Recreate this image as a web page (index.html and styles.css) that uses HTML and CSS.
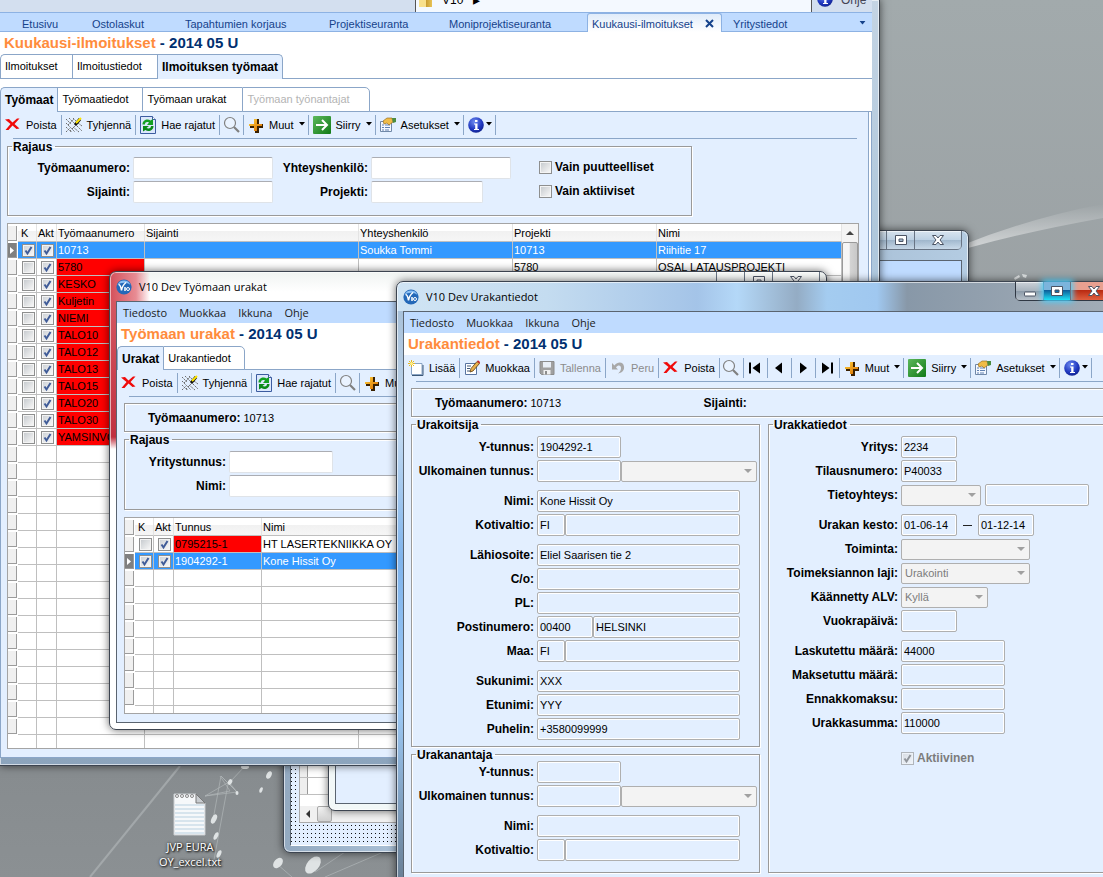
FILE: index.html
```html
<!DOCTYPE html>
<html lang="fi">
<head>
    <meta charset="UTF-8">
    <meta name="viewport" content="width=device-width, initial-scale=1.0">
    <title>V10 Dev Urakantiedot</title>
    <link rel="stylesheet" href="styles.css">
</head>
<body>
    <svg class="symbols" aria-hidden="true">
        <defs>
            <linearGradient id="gGreen" x1="0" y1="0" x2="1" y2="1"><stop offset="0" stop-color="#5cb85c"/><stop offset="1" stop-color="#117a17"/></linearGradient>
            <linearGradient id="gGold" x1="0" y1="0" x2="1" y2="1"><stop offset="0" stop-color="#ffd23c"/><stop offset="1" stop-color="#d86a00"/></linearGradient>
            <radialGradient id="gBlue" cx=".4" cy=".3" r=".8"><stop offset="0" stop-color="#6f8cf0"/><stop offset=".6" stop-color="#2038c0"/><stop offset="1" stop-color="#0c1c80"/></radialGradient>
            <linearGradient id="gPaper" x1="0" y1="0" x2="1" y2="1"><stop offset="0" stop-color="#fff"/><stop offset="1" stop-color="#b8d0f0"/></linearGradient>
        </defs>
        <symbol id="i-delete" viewBox="0 0 16 16"><path d="M0 2.500l4-.5 3.500 3.500L12 1.500h2.500L9.500 7l5 4.500-3 .5-4-3.500L3.500 13H.5L5.500 7z" fill="#f00a0a"/></symbol>
        <symbol id="i-clear" viewBox="0 0 16 16"><path d="M0 2l5 5M3 1l5 5M7 1l3 3M0 6l9 9M0 10l5 5M4 13l2 2M7 10l6 5M11 9l5 5M12 6l4 3M0 15l4-4M2 8l6-6M6 12l4-4" stroke="#6e6e6e" stroke-dasharray="2 1" fill="none"/><path d="M9 8l5-6" stroke="#111" stroke-width="3"/><path d="M10 6l5-5" stroke="#ffe600" stroke-width="2"/></symbol>
        <symbol id="i-refresh" viewBox="0 0 16 18"><path d="M.5.5h12l3 3v14H.5z" fill="#dce8fc" stroke="#3c5ca0"/><path d="M12.500.5v3h3" fill="#fff" stroke="#3c5ca0"/><path d="M2.500 8.500c0-5 5.500-6 8-4L13 3v6H7l2-2.500C7 5.500 5 6 5 8.500z" fill="#13a022"/><path d="M13.500 10c0 5-5.500 6-8 4L3 15.500V10h6l-2.500 2c2 1 4.500.5 4.500-2z" fill="#0a8a18"/></symbol>
        <symbol id="i-search" viewBox="0 0 18 18"><circle cx="7" cy="7" r="5.500" fill="#eaf3ff" stroke="#808080" stroke-width="1.200"/><path d="M11 11l5 5" stroke="#808080" stroke-width="2.200"/></symbol>
        <symbol id="i-plus" viewBox="0 0 16 16"><path d="M7 2h4v5h4v4h-4v5H7v-5H2V7h5z" fill="#3a2000"/><path d="M6 2h3v5h5v2H9v5H6V9H1V7h5z" fill="url(#gGold)"/></symbol>
        <symbol id="i-go" viewBox="0 0 18 18"><rect width="18" height="18" rx="1" fill="url(#gGreen)"/><path d="M3 9h11M9 4l5 5-5 5" stroke="#fff" stroke-width="2" fill="none"/></symbol>
        <symbol id="i-settings" viewBox="0 0 16 16"><path d="M.5 4.500h11v10H.5z" fill="#f4f8ff" stroke="#7088a8"/><path d="M2 8h2M2 10.500h2M2 13h2M5 8h5M5 10.500h5M5 13h4" stroke="#6080b0"/><path d="M3 4l4-3h5l1 4-4 3-2-2-3 1z" fill="#f0bc48" stroke="#8c6010" stroke-width=".6"/><path d="M12 1h4v4l-3 1z" fill="#4c8c40"/></symbol>
        <symbol id="i-info" viewBox="0 0 16 16"><circle cx="8" cy="8" r="7.800" fill="url(#gBlue)"/><path d="M7 3h2.500v2H7zM6 6.500h3.500V12H11v1H6v-1h1.200V7.500H6z" fill="#fff"/></symbol>
        <symbol id="i-new" viewBox="0 0 16 16"><path d="M4 4h11v11.500H4z" fill="url(#gPaper)"/><path d="M3.500 3.500h10.500v11H3.500z" fill="#fff" stroke="#8aa4c4"/><path d="M15 5v10.500H4" fill="none" stroke="#3c5878"/><path d="M3.500 0v7M0 3.500h7M1 1l5 5M6 1L1 6" stroke="#e8b820"/><circle cx="3.500" cy="3.500" r="1.500" fill="#fff08c"/></symbol>
        <symbol id="i-edit" viewBox="0 0 16 16"><path d="M1.500 3.500h11v11h-11z" fill="#fff" stroke="#5874a0"/><path d="M3 6h4M3 8.500h3M3 11h3" stroke="#405878"/><path d="M6 12l1-3.500L13 1.500l2.500 2L9 11z" fill="#e8b04c" stroke="#5c3c10" stroke-width=".8"/><path d="M13 1.500l1-1.200 2.200 2-1 1.200z" fill="#c82828"/></symbol>
        <symbol id="i-save" viewBox="0 0 16 16"><path d="M1 1.500h14v13H2.500L1 13z" fill="#a0a0a0" stroke="#8c8c8c"/><path d="M4 2h8v5.500H4z" fill="#e8eef6"/><path d="M4.500 10h7v4.500h-7z" fill="#f0f0f0"/><path d="M6 11h2v3.500H6z" fill="#8c8c8c"/></symbol>
        <symbol id="i-undo" viewBox="0 0 16 16"><path d="M2 3v6.500h6L6 7.500C8 4.500 11 5 11 8s-1.500 4-3 5.500c5-1 6.500-4 6-7C13.500 2 8 1 4.500 5.500z" fill="#a8a8a8"/></symbol>
        <symbol id="i-first" viewBox="0 0 16 16"><path d="M2 2.500h2v11H2zM13 2.500v11L5.500 8z"/></symbol>
        <symbol id="i-prev" viewBox="0 0 16 16"><path d="M11 2.500v11L4 8z"/></symbol>
        <symbol id="i-next" viewBox="0 0 16 16"><path d="M5 2.500v11L12 8z"/></symbol>
        <symbol id="i-last" viewBox="0 0 16 16"><path d="M12 2.500h2v11h-2zM3 2.500v11L10.500 8z"/></symbol>
        <symbol id="i-arrow" viewBox="0 0 6 4"><path d="M0 0h6L3 3.500z"/></symbol>
        <symbol id="i-app" viewBox="0 0 16 16"><circle cx="8" cy="8" r="7.600" fill="#2468b8"/><path d="M1.500 6a7 7 0 0 1 13 0C11 3 5 3 1.500 6z" fill="#8cc0f4"/><path d="M2.500 5.500c2 0 2.500 3 3 6C6 8 8 5 10 3.500M9 8v4" stroke="#fff" stroke-width="1.500" fill="none"/><circle cx="12" cy="10" r="1.500" stroke="#fff" fill="none"/></symbol>
        <symbol id="i-min" viewBox="0 0 14 12"><rect x="1.500" y="7" width="11" height="4" rx=".5" fill="#fff" stroke="#4c5464"/></symbol>
        <symbol id="i-max" viewBox="0 0 14 12"><path d="M1.500 1.500h11v9h-11zM5 5v2.500h4V5z" fill="#fff" fill-rule="evenodd" stroke="#4c5464"/></symbol>
        <symbol id="i-close" viewBox="0 0 14 12"><path d="M1.500 1.500h3.500l2 2.500 2-2.500h3.500L9 6l3.500 4.500H9L7 8l-2 2.500H1.500L5 6z" fill="#fff" stroke="#4c5464"/></symbol>
    </svg>

    <div class="desktop">
        <svg class="wallpaper" viewBox="0 0 1103 877" preserveAspectRatio="xMaxYMax slice" aria-hidden="true">
            <defs>
                <linearGradient id="sweep" x1="0" y1="0" x2="0" y2="1"><stop offset="0" stop-color="#fff" stop-opacity="0"/><stop offset="1" stop-color="#fff" stop-opacity=".55"/></linearGradient>
            </defs>
            <path d="M960 246Q1030 218 1103 204V218Q1030 231 968 248z" fill="url(#sweep)"/>
            <path d="M180 766L90 877" stroke="#b4b9bb" stroke-width="2" opacity=".6"/>
            <g stroke="#b0b6b8" stroke-width=".7" fill="none">
                <path d="M221 776L237 792 229 782 205 796 237 792 221 776 213 820M230 782l15-16M205 796l25-5-10-15M228 784L214 860M277 864l15 13M315 872l30-20M325 877l70-30"/>
            </g>
            <g fill="#dfe3e4">
                <ellipse cx="245" cy="767" rx="4" ry="2"/>
                <ellipse cx="230" cy="782" rx="2" ry="3" transform="rotate(30 230 782)"/>
                <ellipse cx="237" cy="793" rx="1.500" ry="2"/>
                <ellipse cx="269" cy="775" rx="2.500" ry="4" transform="rotate(25 269 775)"/>
                <ellipse cx="261" cy="790" rx="1.500" ry="3" transform="rotate(25 261 790)"/>
                <ellipse cx="214" cy="819" rx="2.500" ry="5" transform="rotate(25 214 819)"/>
                <ellipse cx="216" cy="836" rx="2" ry="4" transform="rotate(25 216 836)"/>
                <ellipse cx="219" cy="854" rx="2" ry="4" transform="rotate(25 219 854)"/>
                <ellipse cx="278" cy="863" rx="4" ry="6" transform="rotate(40 278 863)"/>
                <ellipse cx="313" cy="865" rx="6" ry="10" transform="rotate(40 313 865)"/>
                <path d="M1014 278l5-3 1 2-5 3zM1022 274l5 1-1 3-3-1z"/>
            </g>
        </svg>

        <a class="shortcut" href="#">
            <svg width="34" height="44" viewBox="0 0 34 44">
                <path d="M1 1h22l9 9v32H1z" fill="#f6f8fa" stroke="#c8ccd0"/>
                <path d="M23 1v9h9z" fill="#c8ccd0" stroke="#777"/>
                <path d="M2 12h29M2 16h29M2 20h29M2 24h29M2 28h29M2 32h29M2 36h29M2 40h29" stroke="#b8d0e0"/>
                <g fill="none" stroke="#888"><circle cx="4" cy="3" r="1.500"/><circle cx="9" cy="3" r="1.500"/><circle cx="14" cy="3" r="1.500"/><circle cx="19" cy="3" r="1.500"/></g>
            </svg>
            <span>JVP EURA<br>OY_excel.txt</span>
        </a>

        <!-- background window -->
        <div class="window win-back">
            <div class="titlebar">
                <div class="controls">
                    <button aria-label="Pienennä"><svg><use href="#i-min"/></svg></button>
                    <button aria-label="Palauta"><svg><use href="#i-max"/></svg></button>
                    <button class="close" aria-label="Sulje"><svg><use href="#i-close"/></svg></button>
                </div>
            </div>
            <div class="client form-canvas">
                <div class="back-grid">
                    <div class="back-rows"><i></i><i></i></div>
                    <div class="hscroll"><span class="left"></span><span class="thumb"></span></div>
                </div>
            </div>
            <div class="window win-child"><div class="client"></div></div>
        </div>

        <!-- main window -->
        <div class="window win-main">
            <div class="topbar">
                <div class="popup"><i class="folder"></i><span>V10</span><span class="tri">▸</span></div>
                <div class="help"><svg class="icon"><use href="#i-info"/></svg>Ohje</div>
            </div>
            <nav class="pages">
                <a href="#" class="p1">Etusivu</a>
                <a href="#" class="p2">Ostolaskut</a>
                <a href="#" class="p3">Tapahtumien korjaus</a>
                <a href="#" class="p4">Projektiseuranta</a>
                <a href="#" class="p5">Moniprojektiseuranta</a>
                <a href="#" class="current">Kuukausi-ilmoitukset <svg width="9" height="9" viewBox="0 0 9 9"><path d="M1 1l7 7M8 1L1 8" stroke="#15428b" stroke-width="2"/></svg></a>
                <a href="#" class="p7">Yritystiedot</a>
                <svg class="more" width="7" height="4" viewBox="0 0 6 4"><use href="#i-arrow"/></svg>
            </nav>
            <h1><em>Kuukausi-ilmoitukset</em> - 2014 05 U</h1>
            <div class="tabs first">
                <button>Ilmoitukset</button>
                <button class="wide">Ilmoitustiedot</button>
                <button class="active">Ilmoituksen työmaat</button>
            </div>
            <div class="tabs">
                <button class="active">Työmaat</button>
                <button class="wide">Työmaatiedot</button>
                <button class="wider">Työmaan urakat</button>
                <button class="widest" disabled>Työmaan työnantajat</button>
            </div>
            <div class="body">
                <div class="toolbar">
                    <button><svg class="icon"><use href="#i-delete"/></svg>Poista</button>
                    <button><svg class="icon"><use href="#i-clear"/></svg>Tyhjennä</button>
                    <button><svg class="icon tall"><use href="#i-refresh"/></svg>Hae rajatut</button>
                    <button class="only" aria-label="Hae"><svg class="icon big"><use href="#i-search"/></svg></button>
                    <button><svg class="icon"><use href="#i-plus"/></svg>Muut<svg class="drop"><use href="#i-arrow"/></svg></button>
                    <button><svg class="icon big"><use href="#i-go"/></svg>Siirry<svg class="drop"><use href="#i-arrow"/></svg></button>
                    <button><svg class="icon"><use href="#i-settings"/></svg>Asetukset<svg class="drop"><use href="#i-arrow"/></svg></button>
                    <button class="info" aria-label="Tietoja"><svg class="icon"><use href="#i-info"/></svg><svg class="drop"><use href="#i-arrow"/></svg></button>
                </div>
                <div class="rule"></div>
                <fieldset class="filter">
                    <legend>Rajaus</legend>
                    <div class="filter-grid">
                        <label for="fNumero">Työmaanumero:</label><input type="text" id="fNumero">
                        <label for="fYhteys">Yhteyshenkilö:</label><input type="text" id="fYhteys">
                        <div class="check"><input type="checkbox" id="fPuut"><label for="fPuut">Vain puutteelliset</label></div>
                        <label for="fSijainti">Sijainti:</label><input type="text" id="fSijainti">
                        <label for="fProjekti">Projekti:</label><input type="text" id="fProjekti" class="w112">
                        <div class="check"><input type="checkbox" id="fAkt"><label for="fAkt">Vain aktiiviset</label></div>
                    </div>
                </fieldset>
                <div class="grid">
                    <table id="sites">
                        <colgroup><col class="c-sel"><col class="c-k"><col class="c-akt"><col class="c-num"><col class="c-loc"><col class="c-con"><col class="c-pro"><col></colgroup>
                        <thead><tr><th><i class="sel"></i></th><th>K</th><th>Akt</th><th>Työmaanumero</th><th>Sijainti</th><th>Yhteyshenkilö</th><th>Projekti</th><th>Nimi</th></tr></thead>
                        <tbody></tbody>
                    </table>
                    <div class="vscroll"><span class="up"></span><span class="thumb"></span></div>
                </div>
            </div>
        </div>

        <!-- contracts of the site -->
        <div class="window win-list">
            <div class="titlebar">
                <svg class="icon"><use href="#i-app"/></svg><span>V10 Dev Työmaan urakat</span>
                <div class="controls">
                    <button aria-label="Pienennä"><svg><use href="#i-min"/></svg></button>
                    <button aria-label="Palauta"><svg><use href="#i-max"/></svg></button>
                    <button class="close" aria-label="Sulje"><svg><use href="#i-close"/></svg></button>
                </div>
            </div>
            <div class="client">
                <nav class="menu"><a href="#">Tiedosto</a><a href="#">Muokkaa</a><a href="#">Ikkuna</a><a href="#">Ohje</a></nav>
                <h1><em>Työmaan urakat</em> - 2014 05 U</h1>
                <div class="tabs">
                    <button class="active">Urakat</button>
                    <button class="wide">Urakantiedot</button>
                </div>
                <div class="body">
                    <div class="toolbar">
                        <button><svg class="icon"><use href="#i-delete"/></svg>Poista</button>
                        <button><svg class="icon"><use href="#i-clear"/></svg>Tyhjennä</button>
                        <button><svg class="icon tall"><use href="#i-refresh"/></svg>Hae rajatut</button>
                        <button class="only" aria-label="Hae"><svg class="icon big"><use href="#i-search"/></svg></button>
                        <button><svg class="icon"><use href="#i-plus"/></svg>Muut<svg class="drop"><use href="#i-arrow"/></svg></button>
                    </div>
                    <div class="rule"></div>
                    <div class="summary"><b>Työmaanumero:</b><span>10713</span></div>
                    <fieldset class="list-filter">
                        <legend>Rajaus</legend>
                        <div class="row"><label for="lTunnus">Yritystunnus:</label><input type="text" id="lTunnus" class="w104"></div>
                        <div class="row"><label for="lNimi">Nimi:</label><input type="text" id="lNimi" class="w203"></div>
                    </fieldset>
                    <div class="grid">
                        <table id="contracts">
                            <colgroup><col class="c-sel"><col class="c-k"><col class="c-akt"><col class="c-num"><col></colgroup>
                            <thead><tr><th><i class="sel"></i></th><th>K</th><th>Akt</th><th>Tunnus</th><th>Nimi</th></tr></thead>
                            <tbody></tbody>
                        </table>
                    </div>
                </div>
            </div>
        </div>

        <!-- contract details -->
        <div class="window win-detail">
            <div class="titlebar">
                <svg class="icon"><use href="#i-app"/></svg><span>V10 Dev Urakantiedot</span>
                <div class="controls">
                    <button aria-label="Pienennä"><svg><use href="#i-min"/></svg></button>
                    <button class="hot" aria-label="Palauta"><svg><use href="#i-max"/></svg></button>
                    <button class="close" aria-label="Sulje"><svg><use href="#i-close"/></svg></button>
                </div>
            </div>
            <div class="client">
                <nav class="menu"><a href="#">Tiedosto</a><a href="#">Muokkaa</a><a href="#">Ikkuna</a><a href="#">Ohje</a></nav>
                <h1><em>Urakantiedot</em> - 2014 05 U</h1>
                <div class="body">
                    <div class="toolbar">
                        <button><svg class="icon"><use href="#i-new"/></svg>Lisää</button>
                        <button><svg class="icon"><use href="#i-edit"/></svg>Muokkaa</button>
                        <button disabled><svg class="icon"><use href="#i-save"/></svg>Tallenna</button>
                        <button disabled><svg class="icon"><use href="#i-undo"/></svg>Peru</button>
                        <button><svg class="icon"><use href="#i-delete"/></svg>Poista</button>
                        <button class="only" aria-label="Hae"><svg class="icon big"><use href="#i-search"/></svg></button>
                        <button class="only" aria-label="Ensimmäinen"><svg class="icon"><use href="#i-first"/></svg></button>
                        <button class="only" aria-label="Edellinen"><svg class="icon"><use href="#i-prev"/></svg></button>
                        <button class="only" aria-label="Seuraava"><svg class="icon"><use href="#i-next"/></svg></button>
                        <button class="only" aria-label="Viimeinen"><svg class="icon"><use href="#i-last"/></svg></button>
                        <button><svg class="icon"><use href="#i-plus"/></svg>Muut<svg class="drop"><use href="#i-arrow"/></svg></button>
                        <button><svg class="icon big"><use href="#i-go"/></svg>Siirry<svg class="drop"><use href="#i-arrow"/></svg></button>
                        <button><svg class="icon"><use href="#i-settings"/></svg>Asetukset<svg class="drop"><use href="#i-arrow"/></svg></button>
                        <button class="info" aria-label="Tietoja"><svg class="icon"><use href="#i-info"/></svg><svg class="drop"><use href="#i-arrow"/></svg></button>
                    </div>
                    <div class="rule"></div>
                    <div class="summary"><b>Työmaanumero:</b><span class="site">10713</span><b>Sijainti:</b></div>
                    <div class="panels">
                        <div class="left">
                            <fieldset>
                                <legend>Urakoitsija</legend>
                                <div class="row"><label for="uY">Y-tunnus:</label><input type="text" id="uY" class="w84" value="1904292-1" readonly></div>
                                <div class="row"><label for="uU">Ulkomainen tunnus:</label><input type="text" id="uU" class="w84" readonly><select class="w136" aria-label="Tunnuksen tyyppi" disabled><option></option></select></div>
                                <div class="row gap"><label for="uN">Nimi:</label><input type="text" id="uN" class="w203" value="Kone Hissit Oy" readonly></div>
                                <div class="row"><label for="uK">Kotivaltio:</label><input type="text" id="uK" class="w28" value="FI" readonly><input type="text" class="w175" aria-label="Kotivaltion nimi" readonly></div>
                                <div class="row gap"><label for="uL">Lähiosoite:</label><input type="text" id="uL" class="w203" value="Eliel Saarisen tie 2" readonly></div>
                                <div class="row"><label for="uC">C/o:</label><input type="text" id="uC" class="w203" readonly></div>
                                <div class="row"><label for="uPL">PL:</label><input type="text" id="uPL" class="w203" readonly></div>
                                <div class="row"><label for="uP">Postinumero:</label><input type="text" id="uP" class="w56" value="00400" readonly><input type="text" class="w147" aria-label="Postitoimipaikka" value="HELSINKI" readonly></div>
                                <div class="row"><label for="uM">Maa:</label><input type="text" id="uM" class="w28" value="FI" readonly><input type="text" class="w175" aria-label="Maan nimi" readonly></div>
                                <div class="row gap"><label for="uS">Sukunimi:</label><input type="text" id="uS" class="w203" value="XXX" readonly></div>
                                <div class="row"><label for="uE">Etunimi:</label><input type="text" id="uE" class="w203" value="YYY" readonly></div>
                                <div class="row"><label for="uPu">Puhelin:</label><input type="text" id="uPu" class="w203" value="+3580099999" readonly></div>
                            </fieldset>
                            <fieldset class="giver">
                                <legend>Urakanantaja</legend>
                                <div class="row"><label for="aY">Y-tunnus:</label><input type="text" id="aY" class="w84" readonly></div>
                                <div class="row"><label for="aU">Ulkomainen tunnus:</label><input type="text" id="aU" class="w84" readonly><select class="w136" aria-label="Antajan tunnuksen tyyppi" disabled><option></option></select></div>
                                <div class="row gap"><label for="aN">Nimi:</label><input type="text" id="aN" class="w203" readonly></div>
                                <div class="row"><label for="aK">Kotivaltio:</label><input type="text" id="aK" class="w28" readonly><input type="text" class="w175" aria-label="Antajan kotivaltion nimi" readonly></div>
                            </fieldset>
                        </div>
                        <fieldset class="right">
                            <legend>Urakkatiedot</legend>
                            <div class="row"><label for="tY">Yritys:</label><input type="text" id="tY" class="w56" value="2234" readonly></div>
                            <div class="row"><label for="tT">Tilausnumero:</label><input type="text" id="tT" class="w56" value="P40033" readonly></div>
                            <div class="row"><label for="tTi">Tietoyhteys:</label><select id="tTi" class="w80" disabled><option></option></select><input type="text" class="w104 apart" aria-label="Tietoyhteyden nimi" readonly></div>
                            <div class="row gap"><label for="tK">Urakan kesto:</label><input type="text" id="tK" class="w56" value="01-06-14" readonly><span class="dash"></span><input type="text" class="w56" aria-label="Urakka päättyy" value="01-12-14" readonly></div>
                            <div class="row"><label for="tTo">Toiminta:</label><select id="tTo" class="w129" disabled><option></option></select></div>
                            <div class="row"><label for="tL">Toimeksiannon laji:</label><select id="tL" class="w129" disabled><option>Urakointi</option></select></div>
                            <div class="row"><label for="tA">Käännetty ALV:</label><select id="tA" class="w87" disabled><option>Kyllä</option></select></div>
                            <div class="row"><label for="tV">Vuokrapäivä:</label><input type="text" id="tV" class="w56" readonly></div>
                            <div class="row gap"><label for="tLa">Laskutettu määrä:</label><input type="text" id="tLa" class="w104" value="44000" readonly></div>
                            <div class="row"><label for="tM">Maksetuttu määrä:</label><input type="text" id="tM" class="w104" readonly></div>
                            <div class="row"><label for="tE">Ennakkomaksu:</label><input type="text" id="tE" class="w104" readonly></div>
                            <div class="row"><label for="tU">Urakkasumma:</label><input type="text" id="tU" class="w104" value="110000" readonly></div>
                            <div class="check inactive"><input type="checkbox" id="tAkt" checked disabled><label for="tAkt">Aktiivinen</label></div>
                        </fieldset>
                    </div>
                </div>
            </div>
        </div>
    </div>

    <script>
        // rows: k, red, selected, cells
        const sites = [
            { k: true, selected: true, cells: ["10713", "", "Soukka Tommi", "10713", "Riihitie 17"] },
            { red: true, cells: ["5780", "", "", "5780", "OSAL LATAUSPROJEKTI"] },
            ...["KESKO", "Kuljetin", "NIEMI", "TALO10", "TALO12", "TALO13", "TALO15", "TALO20", "TALO30", "YAMSINVOI"]
                .map(name => ({ red: true, cells: [name, "", "", "", ""] }))
        ];
        const contracts = [
            { red: true, cells: ["0795215-1", "HT LASERTEKNIIKKA OY"] },
            { k: true, selected: true, cells: ["1904292-1", "Kone Hissit Oy"] }
        ];

        function box(checked, label) {
            return `<input type="checkbox" aria-label="${label}" ${checked ? "checked" : ""}>`;
        }

        function fillTable(id, rows, columns, emptyRows) {
            let html = rows.map(r => `<tr class="${r.selected ? "selected" : ""} ${r.red ? "red" : ""}">
                <td><i class="sel"></i></td><td>${box(r.k, "K")}</td><td>${box(true, "Akt")}</td>
                ${r.cells.map(c => `<td>${c}</td>`).join("")}</tr>`).join("");
            for (let i = 0; i <= emptyRows; i++) {
                // the last one is only partly visible and has no selector
                let sel = i < emptyRows ? `<i class="sel"></i>` : "";
                html += `<tr><td>${sel}</td>${"<td></td>".repeat(columns + 2)}</tr>`;
            }
            document.querySelector(`#${id} tbody`).innerHTML = html;
        }

        fillTable("sites", sites, 5, 17);
        fillTable("contracts", contracts, 2, 8);
    </script>
</body>
</html>
```
FILE: styles.css
```css
* {
    box-sizing: border-box;
}
body {
    margin: 0;
    font-family: "Liberation Sans", Arial, sans-serif;
    font-size: 11px;
    line-height: 14px;
    color: #000;
}
button, input, select {
    font: inherit;
    color: inherit;
    margin: 0;
}
a {
    color: inherit;
    text-decoration: none;
}
.symbols {
    position: absolute;
    width: 0;
    height: 0;
}
.desktop {
    position: relative;
    height: 100vh;
    overflow: hidden;
    background: linear-gradient(#a2aaac, #9aa0a3 40%, #868b8e 85%, #8b9093);
}
.wallpaper {
    position: absolute;
    inset: 0;
    width: 100%;
    height: 100%;
}
.shortcut {
    position: absolute;
    left: 150px;
    bottom: 8px;
    width: 80px;
    display: flex;
    flex-direction: column;
    align-items: center;
    gap: 2px;
    color: #fff;
    font-family: "Open Sans", sans-serif;
    line-height: 15px;
    text-align: center;
    text-shadow: 1px 1px 2px #000, 0 0 3px #222;
}

/* windows */
.window {
    position: absolute;
    display: flex;
    flex-direction: column;
    border: 1px solid #3c4450;
    border-radius: 7px;
    padding: 0 6px 6px;
    box-shadow: inset 0 0 0 1px rgba(255, 255, 255, .6), 0 0 8px rgba(0, 0, 0, .6);
    background: #a8c0d8;
}
.client {
    flex: 1;
    min-height: 0;
    display: flex;
    flex-direction: column;
    overflow: hidden;
    border: 1px solid #5a6470;
    background: #fff;
}
.titlebar {
    height: 29px;
    flex: none;
    display: flex;
    align-items: center;
    gap: 7px;
    font-family: "Open Sans", sans-serif;
}
.controls {
    display: flex;
    align-self: flex-start;
    margin-left: auto;
    height: 19px;
    border: 1px solid #687484;
    border-top: 0;
    border-radius: 0 0 5px 5px;
}
.controls button {
    width: 28px;
    padding: 0;
    border: 0;
    border-right: 1px solid #687484;
    background: linear-gradient(rgba(255, 255, 255, .5), rgba(255, 255, 255, .15) 50%, rgba(90, 110, 130, .2) 50%, rgba(255, 255, 255, .3));
    display: flex;
    align-items: center;
    justify-content: center;
}
.controls .close {
    width: 46px;
    border-right: 0;
}
.controls svg {
    width: 14px;
    height: 12px;
}
.win-back {
    left: 283px;
    top: 230px;
    right: 134px;
    bottom: 24px;
    background: linear-gradient(90deg, #93a9c0, #a8bed4 15%, #93a9c0 50%, #b4cce2);
}
.win-back .client {
    border-bottom-color: #fff;
}
.form-canvas {
    background:
        linear-gradient(#bfdbff 40px, transparent 40px),
        linear-gradient(90deg, transparent 1px, #e3efff 1px) 0 0 / 4px 4px,
        linear-gradient(#111 1px, #e3efff 1px) 0 0 / 4px 4px;
}
.back-grid {
    flex: 1;
    margin: 60px 0 22px 8px;
    display: flex;
    flex-direction: column;
    background: #fff;
    border: 1px solid #aaa;
}
.back-rows {
    flex: 1;
    display: flex;
    flex-direction: column;
    justify-content: flex-end;
    padding-bottom: 11px;
}
.back-rows i {
    height: 17px;
    border-bottom: 1px solid #bfbfbf;
    background: linear-gradient(90deg, #eee 7px, #999 7px, #999 8px, #fff 8px);
}
.hscroll {
    height: 16px;
    display: flex;
    background: #f0f0f0;
}
.hscroll .left {
    width: 17px;
}
.hscroll .left::after {
    content: "";
    display: block;
    width: 4px;
    height: 8px;
    margin: 4px 6px;
    background: #333;
    clip-path: polygon(100% 0, 100% 100%, 0 50%);
}
.hscroll .thumb {
    width: 15px;
    border: 1px solid #aaa;
    border-radius: 2px;
    background: linear-gradient(#f4f4f4, #cfcfcf);
}
.win-child {
    left: 44px;
    top: 70px;
    right: 12px;
    bottom: 41px;
    padding-top: 6px;
    background: #f2f8f8;
}
.win-child .client {
    border-bottom-color: #5a6470;
    background: #e3efff;
}
.win-main {
    left: 0;
    top: -1px;
    right: 223px;
    bottom: 111px;
    border-left: 0;
    border-radius: 0;
    padding: 0 7px 7px 0;
    background: linear-gradient(90deg, transparent 70%, #d4f4f4 88%, transparent 95%) bottom / 400px 8px no-repeat, linear-gradient(#c4d4e4, #b0c8dc 30%, #a4c4e4 75%, #8ca4bc);
}

/* main window header */
.topbar {
    flex: none;
    height: 13px;
    overflow: hidden;
    display: flex;
    background: #d3dfef;
    border-bottom: 1px solid #8db2e3;
}
.popup {
    width: 397px;
    height: 12px;
    margin-left: 415px;
    padding-left: 3px;
    display: flex;
    gap: 10px;
    background: #f4f9ff;
    border-left: 1px solid #555;
    border-right: 1px solid #555;
    line-height: 0;
    font-size: 12px;
}
.folder {
    width: 13px;
    height: 7px;
    background: linear-gradient(90deg, #f8e08c 55%, #c89c30 55%, #e8c458);
}
.popup .tri {
    font-size: 14px;
}
.help {
    display: flex;
    gap: 8px;
    margin-left: 5px;
    line-height: 0;
    color: #445;
    font-size: 12px;
}
.help .icon {
    margin-top: -9px;
}
.pages {
    flex: none;
    height: 19px;
    display: flex;
    align-items: stretch;
    background: #bfdbff;
    border-bottom: 1px solid #8db2e3;
    color: #15428b;
    line-height: 22px;
    padding-left: 22px;
}
.pages a {
    flex: none;
}
.p1 { width: 70px; }
.p2 { width: 93px; }
.p3 { width: 144px; }
.p4 { width: 120px; }
.p5 { width: 138px; }
.p7 { margin-left: 11px; }
.pages .current {
    width: 135px;
    height: 19px;
    padding: 1px 7px 0 4px;
    display: flex;
    align-items: center;
    justify-content: space-between;
    border: 1px solid #8db2e3;
    border-bottom: 0;
    border-radius: 3px 3px 0 0;
    background: linear-gradient(#e0ecfa, #fff);
}
.pages .more {
    margin: 8px 6px 0 auto;
    fill: #15428b;
}
h1 {
    flex: none;
    height: 22px;
    margin: 0;
    padding-left: 4px;
    background: #fff;
    font-size: 15px;
    line-height: 22px;
    color: #003070;
}
h1 em {
    font-style: normal;
    color: #ff8c3c;
}
.tabs {
    flex: none;
    height: 25px;
    display: flex;
    background: linear-gradient(#8ba6c8, #8ba6c8) bottom / 100% 1px no-repeat, #fff;
}
.tabs.first {
    height: 33px;
    padding-bottom: 8px;
    background: linear-gradient(#8ba6c8, #8ba6c8) 0 24px / 100% 1px no-repeat, #fff;
}
.tabs button {
    width: 72px;
    padding: 0 4px 1px;
    border: 1px solid #8ba6c8;
    border-right: 0;
    background: #fff;
    text-align: left;
}
.tabs button:first-child {
    border-top-left-radius: 5px;
}
.tabs button:last-child {
    border-right: 1px solid #8ba6c8;
    border-top-right-radius: 5px;
}
.tabs button:disabled {
    color: #b4b4b4;
}
.tabs .wide { width: 85px; }
.tabs .wider { width: 100px; }
.tabs .widest { width: 128px; }
.tabs .active {
    width: auto;
    padding: 0 4px;
    border-bottom: 0;
    background: #e3efff;
    font-size: 12px;
    font-weight: bold;
}
.win-list .tabs {
    height: 24px;
}
.win-list .tabs .wide {
    width: 82px;
}
.body {
    flex: 1;
    min-height: 0;
    display: flex;
    flex-direction: column;
    background: #e3efff;
}
.win-main .body {
    border: 1px solid #8ba6c8;
    border-top: 0;
    margin-right: 3px;
    box-shadow: 2px 0 #fff, 3px 0 #8ba6c8;
    padding-bottom: 8px;
}

/* toolbar */
.toolbar {
    flex: none;
    height: 26px;
    display: flex;
    padding: 3px 0;
}
.toolbar button {
    flex: none;
    display: flex;
    align-items: center;
    gap: 5px;
    padding: 0 4px;
    border: 0;
    border-right: 1px solid #8ba6c8;
    background: none;
}
.toolbar button:disabled {
    color: #8c8c8c;
}
.toolbar .only {
    width: 24px;
    padding: 0;
    justify-content: center;
}
.toolbar .info {
    gap: 2px;
    padding: 0 3px 0 4px;
}
.icon {
    width: 16px;
    height: 16px;
    flex: none;
}
.icon.big {
    width: 18px;
    height: 18px;
}
.icon.tall {
    height: 18px;
}
.drop {
    width: 6px;
    height: 4px;
    flex: none;
    margin-right: -1px;
    margin-top: -2px;
}
.info .drop {
    margin-right: 0;
}
.rule {
    flex: none;
    height: 1px;
    margin: 0 11px 0 12px;
    background: #8ba6c8;
}
.win-detail .rule {
    margin-right: 0;
}

/* forms */
fieldset {
    flex: none;
    min-width: 0;
    margin: 0;
    padding: 4px 0 0;
    border: 1px solid #9a9a9a;
    box-shadow: inset 1px 1px #fff, 1px 1px #fff;
    font-size: 12px;
    font-weight: bold;
}
legend {
    margin-left: 4px;
    padding: 2px 3px 0 1px;
    line-height: 12px;
}
label, .summary b {
    font-size: 12px;
    font-weight: bold;
}
input[type="text"] {
    width: 100%;
    height: 22px;
    padding: 0 3px;
    border: 1px solid #dfe3e8;
    border-top-color: #abadb3;
    border-radius: 2px;
    background: #fff;
    font-size: 11px;
    font-weight: normal;
    outline: none;
}
input[readonly] {
    padding: 0 2px;
    border-color: #afafaf;
    background: #e3efff;
    box-shadow: inset 0 0 0 1px #fff;
}
select {
    height: 21px;
    padding: 0 3px;
    appearance: none;
    border: 1px solid #afafaf;
    border-radius: 2px;
    background: #f3f3f3 url("data:image/svg+xml,%3Csvg xmlns='http://www.w3.org/2000/svg' width='8' height='4'%3E%3Cpath d='M0 0h8L4 4z' fill='%23a0a0a0'/%3E%3C/svg%3E") right 4px center no-repeat;
    font-size: 11px;
    font-weight: normal;
}
select:disabled {
    color: #7c7c7c;
    opacity: 1;
}
input[type="checkbox"] {
    appearance: none;
    width: 13px;
    height: 13px;
    border: 1px solid #8e8f8f;
    background: linear-gradient(135deg, #c8ccd0, #f6f6f6) content-box, #f4f4f4;
    padding: 1px;
}
input[type="checkbox"]:checked {
    background: url("data:image/svg+xml,%3Csvg xmlns='http://www.w3.org/2000/svg' width='11' height='11'%3E%3Cpath d='M2.500 5.500L4.500 8.500 8.500 2' stroke='%23405c98' stroke-width='2' fill='none'/%3E%3C/svg%3E") center no-repeat border-box, linear-gradient(135deg, #d0d4d8, #f6f6f6) content-box, #f4f4f4;
}
input[type="checkbox"]:disabled {
    filter: grayscale(1);
    opacity: .6;
}
input.w28 { width: 28px; }
input.w56 { width: 56px; }
input.w84 { width: 84px; }
input.w104 { width: 104px; }
input.w112 { width: 112px; }
input.w147 { width: 147px; }
input.w175 { width: 175px; }
input.w203 { width: 203px; }
.w80 { width: 80px; }
.w87 { width: 87px; }
.w129 { width: 129px; }
.w136 { width: 136px; }
.row {
    display: flex;
    align-items: center;
    height: 22px;
    margin-bottom: 2px;
}
.row.gap {
    margin-top: 8px;
}
.row label {
    flex: none;
    width: 122px;
    margin-right: 3px;
    text-align: right;
}
.right .row label {
    width: 129px;
}
.apart {
    margin-left: 4px;
}
.dash {
    width: 9px;
    height: 1px;
    margin: 0 6px;
    background: #222;
}
.check {
    display: flex;
    align-items: center;
    gap: 3px;
}
.inactive {
    margin: 17px 0 0 132px;
    color: #7c7c7c;
}
.filter {
    width: 685px;
    margin: 0 0 7px 6px;
    padding-bottom: 12px;
}
.filter-grid {
    display: grid;
    grid-template-columns: 122px 140px 92px 140px auto;
    gap: 2px 3px;
    align-items: center;
}
.filter-grid > label {
    text-align: right;
}
.filter-grid .check {
    margin-left: 25px;
    padding-bottom: 2px;
}
.summary {
    flex: none;
    height: 29px;
    margin: 6px 0 0 7px;
    padding-left: 23px;
    display: flex;
    align-items: center;
    gap: 3px;
    border: 1px solid #9a9a9a;
    box-shadow: inset 1px 1px #fff, 0 1px #fff;
}
.summary .site {
    width: 170px;
}
.list-filter {
    margin: 0 7px 7px;
    padding-top: 5px;
    padding-bottom: 10px;
}
.list-filter .row label {
    width: 101px;
}

/* grids */
.grid {
    flex: 1;
    min-height: 0;
    margin: 0 9px 0 6px;
    display: flex;
    overflow: hidden;
    background: #fff;
    border: 1px solid #a4a4a4;
}
.win-list .grid {
    margin: 0 7px 8px;
}
table {
    flex: 1;
    width: 100%;
    align-self: flex-start;
    table-layout: fixed;
    border-collapse: separate;
    border-spacing: 0;
}
.c-sel { width: 10px; }
.c-k { width: 19px; }
.c-akt { width: 20px; }
.c-num { width: 88px; }
.c-loc { width: 214px; }
.c-con { width: 154px; }
.c-pro { width: 144px; }
th, td {
    height: 17px;
    padding: 0 1px;
    border: 0 solid #bfbfbf;
    border-width: 0 1px 1px 0;
    line-height: 16px;
    text-align: left;
    font-weight: normal;
    white-space: nowrap;
    overflow: hidden;
}
th {
    height: 18px;
    border-right-color: #e4e4e4;
    background: linear-gradient(#fff 40%, #f1f1f1 40%, #f6f6f6);
}
th:nth-child(2) {
    padding-left: 3px;
}
th:first-child, td:first-child {
    padding: 0;
    border: 0;
    background: #fff;
}
td input[type="checkbox"] {
    display: block;
    margin-left: 3px;
}
.sel {
    display: block;
    width: 9px;
    height: 15px;
    border: 1px solid #9c9c9c;
    border-width: 0 1px 1px 0;
    background: #f0f0f0;
}
.selected .sel {
    background: #808080;
}
.selected .sel::after {
    content: "";
    display: block;
    width: 4px;
    height: 7px;
    margin: 0 2px;
    transform: translateY(4px);
    background: #fff;
    clip-path: polygon(0 0, 100% 50%, 0 100%);
}
.selected td:not(:first-child) {
    background: #3399ff;
    color: #fff;
}
.red td:nth-child(4) {
    background: #f00;
}
.vscroll {
    flex: none;
    width: 16px;
    display: flex;
    flex-direction: column;
    background: #eee;
}
.vscroll .up {
    height: 18px;
    background: #f4f4f4;
}
.vscroll .up::after {
    content: "";
    display: block;
    width: 8px;
    height: 4px;
    margin: 7px 4px;
    background: #444;
    clip-path: polygon(50% 0, 100% 100%, 0 100%);
}
.vscroll .thumb {
    height: 200px;
    border: 1px solid #999;
    border-radius: 2px;
    background: linear-gradient(90deg, #f6f6f6 45%, #d4d4d4 50%, #c8c8c8);
}

/* list window */
.win-list {
    left: 109px;
    top: 271px;
    right: 276px;
    bottom: 147px;
    background: linear-gradient(90deg, #d4505a, #e88c94 26px, transparent 40px) 0 0 / 100% 29px no-repeat, linear-gradient(#d86068, #c03040 165px, rgba(255, 255, 255, 0) 177px) 0 0 / 7px 100% no-repeat, linear-gradient(#f0f4f2, #fff 20px);
}
.menu {
    flex: none;
    height: 21px;
    display: flex;
    align-items: center;
    gap: 12px;
    padding-left: 6px;
    background: #bfdbff;
    font-family: "Open Sans", sans-serif;
    color: #1c1c1c;
}
.win-list h1 {
    height: 23px;
}

/* detail window */
.win-detail {
    left: 396px;
    top: 281px;
    right: -22px;
    bottom: -20px;
    background: linear-gradient(90deg, #d0e4f4, #c4dcf0 150px, #a4c4e8 300px, #b4d8f8 340px, #94acc4 400px, #a4ccf0 430px, #a0c8f0 480px, #8898a8 510px, #a4aeb8) 0 0 / 100% 29px no-repeat, linear-gradient(#a4bcd4, #c0d8f0 25%, #80b4ec 45%, #9cc8f4 70%, #64788c);
}
.win-detail .controls {
    border-color: #303844;
}
.controls .hot {
    width: 27px;
    background: linear-gradient(#7cb4dc 45%, #0c5c98 45%, #20e0f4);
    box-shadow: 0 0 6px 2px #4cd0fc;
    position: relative;
}
.win-detail .close {
    background: linear-gradient(#e8a090 45%, #b82810 45%, #e06040);
}
.win-detail .summary {
    margin-right: 0;
}
.panels {
    flex: 1;
    display: flex;
    gap: 8px;
    padding-left: 7px;
}
.panels .left {
    width: 349px;
    flex: none;
}
.panels .right {
    flex: 1;
    margin-bottom: 16px;
    padding-top: 5px;
}
.panels .left fieldset {
    padding: 5px 0 4px;
}
.panels .left .giver {
    padding: 0 0 9px;
}
```
